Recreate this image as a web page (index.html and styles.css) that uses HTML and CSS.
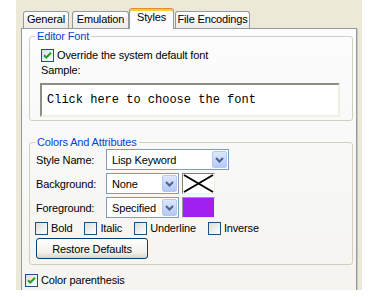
FILE: index.html
```html
<!DOCTYPE html>
<html lang="en">
<head>
  <meta charset="UTF-8">
  <meta name="viewport" content="width=device-width, initial-scale=1.0">
  <title>Styles</title>
  <link rel="stylesheet" href="styles.css">
</head>
<body>
  <div class="dialog">
    <div class="tabs">
      <div class="tab tab-general">General</div>
      <div class="tab tab-emulation">Emulation</div>
      <div class="tab tab-styles active">Styles</div>
      <div class="tab tab-encodings">File Encodings</div>
    </div>
    <div class="panel">
      <fieldset class="group">
        <legend>Editor Font</legend>
        <div class="font-body">
          <label class="check">
            <span class="box"><svg viewBox="0 0 11 11" width="11" height="11"><path d="M2 5.2l2.3 2.3L9 2.8" fill="none" stroke="#21A121" stroke-width="2"/></svg></span>
            Override the system default font
          </label>
          <div class="caption">Sample:</div>
          <div class="sample">Click here to choose the font</div>
        </div>
      </fieldset>

      <fieldset class="group attr-group">
        <legend>Colors And Attributes</legend>
        <div class="attr-body">
          <div class="field">
            <span class="field-label">Style Name:</span>
            <div class="combo wide">Lisp Keyword<span class="drop"><svg viewBox="0 0 9 6" width="9" height="6"><path d="M1 1l3.5 3.5L8 1" fill="none" stroke="#4D6185" stroke-width="2"/></svg></span></div>
          </div>
          <div class="field">
            <span class="field-label">Background:</span>
            <div class="combo">None<span class="drop"><svg viewBox="0 0 9 6" width="9" height="6"><path d="M1 1l3.5 3.5L8 1" fill="none" stroke="#4D6185" stroke-width="2"/></svg></span></div>
            <span class="swatch"><svg viewBox="0 0 31 19" width="31" height="19" preserveAspectRatio="none"><path d="M1 1L30 18M30 1L1 18" stroke="#000" stroke-width="2"/></svg></span>
          </div>
          <div class="field">
            <span class="field-label">Foreground:</span>
            <div class="combo">Specified<span class="drop"><svg viewBox="0 0 9 6" width="9" height="6"><path d="M1 1l3.5 3.5L8 1" fill="none" stroke="#4D6185" stroke-width="2"/></svg></span></div>
            <span class="swatch purple"></span>
          </div>
          <div class="attrs">
            <label class="check"><span class="box"></span>Bold</label>
            <label class="check"><span class="box"></span>Italic</label>
            <label class="check"><span class="box"></span>Underline</label>
            <label class="check"><span class="box"></span>Inverse</label>
          </div>
          <button class="restore-btn">Restore Defaults</button>
        </div>
      </fieldset>

      <label class="check paren">
        <span class="box"><svg viewBox="0 0 11 11" width="11" height="11"><path d="M2 5.2l2.3 2.3L9 2.8" fill="none" stroke="#21A121" stroke-width="2"/></svg></span>
        Color parenthesis
      </label>
    </div>
  </div>
</body>
</html>
```

FILE: styles.css
```css
body {
  margin: 0;
  background: #fff;
  color: #000;
  font-family: "Liberation Sans", Arial, sans-serif;
  font-size: 11px;
  letter-spacing: -0.15px;
}
.dialog {
  margin-left: 16px;
  width: 346px;
  height: 290px;
  box-sizing: border-box;
  padding: 8px 5px 0 5px;
  background: #ECE9D8;
  overflow: hidden;
}
.tabs {
  display: flex;
  align-items: flex-end;
  height: 20px;
  padding-left: 2px;
  position: relative;
  z-index: 1;
}
.tab {
  height: 17px;
  box-sizing: border-box;
  padding-top: 1px;
  border: 1px solid #919B9C;
  border-bottom: none;
  border-radius: 3px 3px 0 0;
  background: linear-gradient(#FFFFFF, #ECEBE6);
  line-height: 13px;
  text-align: center;
  margin-right: 3px;
  white-space: nowrap;
}
.tab-general { width: 46px; }
.tab-emulation { width: 57px; }
.tab-styles { width: 45px; }
.tab-encodings { width: 75px; }
.tab.active {
  height: 21px;
  margin: 0 1px -1px -3px;
  padding-top: 2px;
  border-top: 1px solid #E68B2C;
  box-shadow: inset 0 2px 0 #FFC83C;
  background: #FCFCFE;
}
.panel {
  height: 290px;
  box-sizing: border-box;
  padding: 1px 3px 0 7px;
  border: 1px solid #919B9C;
  background: linear-gradient(#FCFCFE, #F4F3EE);
  box-shadow: 1px 1px 0 #C9C7BA;
}
.group {
  margin: 0;
  padding: 0;
  min-width: 0;
  border: 1px solid #D0D0BF;
  border-radius: 3px;
}
.group legend {
  margin-left: 5px;
  padding: 0 2px;
  line-height: 13px;
  color: #0046D5;
}
.font-body {
  padding: 6px 12px 3px 11px;
}
.check {
  display: flex;
  align-items: center;
  gap: 3px;
  height: 13px;
  line-height: 13px;
  white-space: nowrap;
}
.box {
  width: 13px;
  height: 13px;
  box-sizing: border-box;
  border: 1px solid #1C5180;
  background: linear-gradient(135deg, #DCDCD7, #FFFFFF);
  display: flex;
}
.caption {
  margin-top: 2px;
  line-height: 13px;
}
.sample {
  margin: 6px 0 0 -1px;
  width: 300px;
  height: 34px;
  box-sizing: border-box;
  padding-left: 5px;
  border: 2px solid;
  border-color: #8E8C84 #F1EFE2 #F1EFE2 #8E8C84;
  background: #fff;
  font-family: "Liberation Mono", "Courier New", monospace;
  font-size: 12px;
  letter-spacing: 0;
  line-height: 30px;
  white-space: nowrap;
}
.attr-group {
  margin-top: 15px;
}
.attr-body {
  padding: 0 0 5px 6px;
}
.field {
  display: flex;
  align-items: center;
  height: 21px;
}
.field + .field {
  margin-top: 3px;
}
.field-label {
  width: 70px;
}
.combo {
  width: 73px;
  height: 21px;
  box-sizing: border-box;
  border: 1px solid #7F9DB9;
  background: #fff;
  padding-left: 5px;
  display: flex;
  align-items: center;
  justify-content: space-between;
  white-space: nowrap;
}
.combo.wide {
  width: 123px;
}
.drop {
  width: 15px;
  height: 17px;
  margin-right: 1px;
  box-sizing: border-box;
  border: 1px solid #B4C8F2;
  border-radius: 2px;
  background: linear-gradient(#DDE7FD, #B5C9F6);
  display: flex;
  align-items: center;
  justify-content: center;
}
.swatch {
  margin-left: 3px;
  width: 33px;
  height: 21px;
  box-sizing: border-box;
  border: 1px solid;
  border-color: #808080 #F1EFE2 #F1EFE2 #808080;
  background: #fff;
  display: flex;
}
.swatch.purple {
  background: #A020F0;
  border-color: #9A9A9A #F1EFE2 #F1EFE2 #9A9A9A;
}
.attrs {
  display: flex;
  gap: 12px;
  margin: 4px 0 0 -1px;
}
.restore-btn {
  display: block;
  margin-top: 3px;
  width: 112px;
  height: 21px;
  padding: 0;
  border: 1px solid #003C74;
  border-radius: 3px;
  background: linear-gradient(#FFFFFF, #F2F1EB 70%, #D8D5C8);
  font-family: inherit;
  font-size: 11px;
  letter-spacing: inherit;
  color: #000;
}
.paren {
  margin: 9px 0 0 -4px;
}
```
